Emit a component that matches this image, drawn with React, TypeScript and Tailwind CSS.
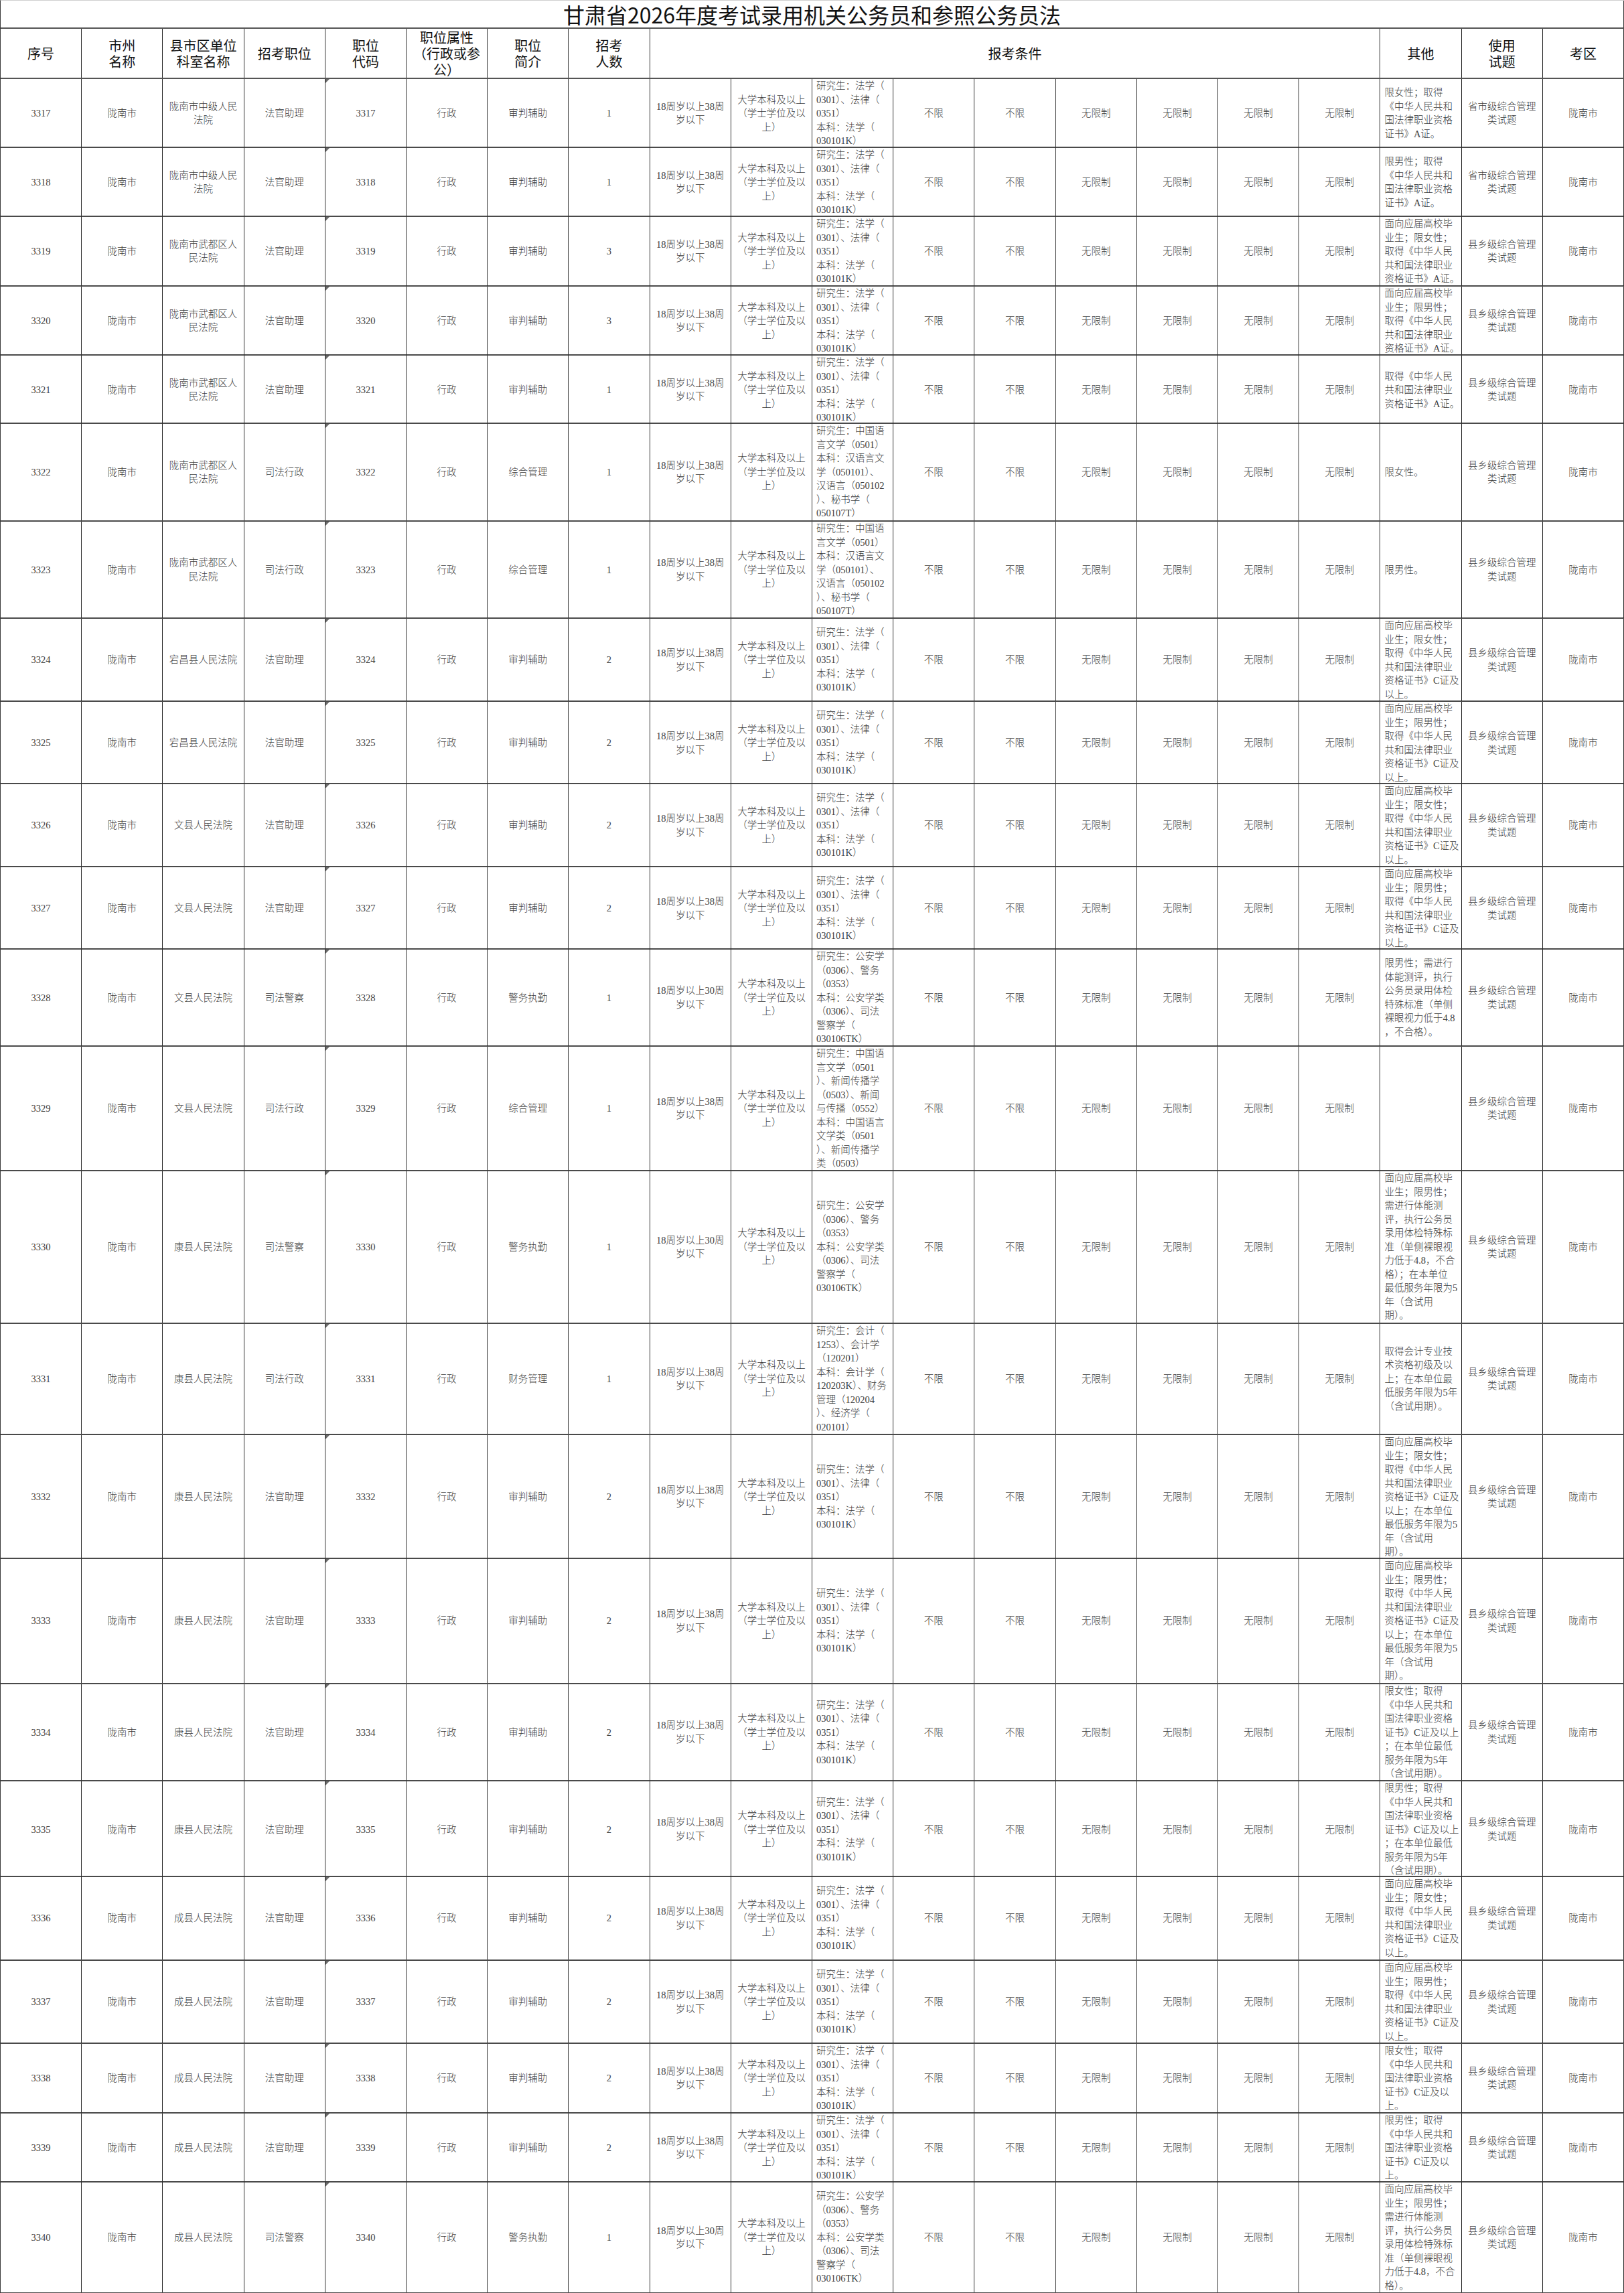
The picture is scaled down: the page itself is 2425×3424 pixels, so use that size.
import React from 'react'

type Row = {
  no: number
  h: string
  unit: string[]
  post: string
  brief: string
  count: string
  age: string
  major: string[]
  other: string[]
  exam: string
}

const LAW = ['研究生：法学（', '0301）、法律（', '0351）', '本科：法学（', '030101K）']
const CHN = ['研究生：中国语', '言文学（0501）', '本科：汉语言文', '学（050101）、', '汉语言（050102', '）、秘书学（', '050107T）']
const POL = ['研究生：公安学', '（0306）、警务', '（0353）', '本科：公安学类', '（0306）、司法', '警察学（', '030106TK）']
const NEWS = ['研究生：中国语', '言文学（0501', '）、新闻传播学', '（0503）、新闻', '与传播（0552）', '本科：中国语言', '文学类（0501', '）、新闻传播学', '类（0503）']
const ACC = ['研究生：会计（', '1253）、会计学', '（120201）', '本科：会计学（', '120203K）、财务', '管理（120204', '）、经济学（', '020101）']

const aCert = (sex: string) => [`限${sex}性；取得`, '《中华人民共和', '国法律职业资格', '证书》A证。']
const gradA = (sex: string) => ['面向应届高校毕', `业生；限${sex}性；`, '取得《中华人民', '共和国法律职业', '资格证书》A证。']
const gradC = (sex: string) => ['面向应届高校毕', `业生；限${sex}性；`, '取得《中华人民', '共和国法律职业', '资格证书》C证及', '以上。']
const gradC5 = (sex: string) => [...gradC(sex).slice(0, 5), '以上；在本单位', '最低服务年限为5', '年（含试用', '期）。']
const cCert5 = (sex: string) => [`限${sex}性；取得`, '《中华人民共和', '国法律职业资格', '证书》C证及以上', '；在本单位最低', '服务年限为5年', '（含试用期）。']
const cCert = (sex: string) => [`限${sex}性；取得`, '《中华人民共和', '国法律职业资格', '证书》C证及以', '上。']

const POL_A = ['限男性；需进行', '体能测评，执行', '公务员录用体检', '特殊标准（单侧', '裸眼视力低于4.8', '，不合格）。']
const POL_GRAD = ['面向应届高校毕', '业生；限男性；', '需进行体能测', '评，执行公务员', '录用体检特殊标', '准（单侧裸眼视', '力低于4.8，不合']

const ZJ = ['陇南市中级人民', '法院']
const WD = ['陇南市武都区人', '民法院']
const DC = ['宕昌县人民法院']
const WX = ['文县人民法院']
const KX = ['康县人民法院']
const CX = ['成县人民法院']

const rows: Row[] = [
  { no: 3317, h: 'h-[103px]', unit: ZJ, post: '法官助理', brief: '审判辅助', count: '1', age: '38', major: LAW, other: aCert('女'), exam: '省市级' },
  { no: 3318, h: 'h-[103px]', unit: ZJ, post: '法官助理', brief: '审判辅助', count: '1', age: '38', major: LAW, other: aCert('男'), exam: '省市级' },
  { no: 3319, h: 'h-[104px]', unit: WD, post: '法官助理', brief: '审判辅助', count: '3', age: '38', major: LAW, other: gradA('女'), exam: '县乡级' },
  { no: 3320, h: 'h-[103px]', unit: WD, post: '法官助理', brief: '审判辅助', count: '3', age: '38', major: LAW, other: gradA('男'), exam: '县乡级' },
  { no: 3321, h: 'h-[102px]', unit: WD, post: '法官助理', brief: '审判辅助', count: '1', age: '38', major: LAW, other: ['取得《中华人民', '共和国法律职业', '资格证书》A证。'], exam: '县乡级' },
  { no: 3322, h: 'h-[146px]', unit: WD, post: '司法行政', brief: '综合管理', count: '1', age: '38', major: CHN, other: ['限女性。'], exam: '县乡级' },
  { no: 3323, h: 'h-[145px]', unit: WD, post: '司法行政', brief: '综合管理', count: '1', age: '38', major: CHN, other: ['限男性。'], exam: '县乡级' },
  { no: 3324, h: 'h-[124px]', unit: DC, post: '法官助理', brief: '审判辅助', count: '2', age: '38', major: LAW, other: gradC('女'), exam: '县乡级' },
  { no: 3325, h: 'h-[123px]', unit: DC, post: '法官助理', brief: '审判辅助', count: '2', age: '38', major: LAW, other: gradC('男'), exam: '县乡级' },
  { no: 3326, h: 'h-[124px]', unit: WX, post: '法官助理', brief: '审判辅助', count: '2', age: '38', major: LAW, other: gradC('女'), exam: '县乡级' },
  { no: 3327, h: 'h-[123px]', unit: WX, post: '法官助理', brief: '审判辅助', count: '2', age: '38', major: LAW, other: gradC('男'), exam: '县乡级' },
  { no: 3328, h: 'h-[145px]', unit: WX, post: '司法警察', brief: '警务执勤', count: '1', age: '30', major: POL, other: POL_A, exam: '县乡级' },
  { no: 3329, h: 'h-[186px]', unit: WX, post: '司法行政', brief: '综合管理', count: '1', age: '38', major: NEWS, other: [], exam: '县乡级' },
  { no: 3330, h: 'h-[228px]', unit: KX, post: '司法警察', brief: '警务执勤', count: '1', age: '30', major: POL, other: [...POL_GRAD, '格）；在本单位', '最低服务年限为5', '年（含试用', '期）。'], exam: '县乡级' },
  { no: 3331, h: 'h-[166px]', unit: KX, post: '司法行政', brief: '财务管理', count: '1', age: '38', major: ACC, other: ['取得会计专业技', '术资格初级及以', '上；在本单位最', '低服务年限为5年', '（含试用期）。'], exam: '县乡级' },
  { no: 3332, h: 'h-[185px]', unit: KX, post: '法官助理', brief: '审判辅助', count: '2', age: '38', major: LAW, other: gradC5('女'), exam: '县乡级' },
  { no: 3333, h: 'h-[187px]', unit: KX, post: '法官助理', brief: '审判辅助', count: '2', age: '38', major: LAW, other: gradC5('男'), exam: '县乡级' },
  { no: 3334, h: 'h-[145px]', unit: KX, post: '法官助理', brief: '审判辅助', count: '2', age: '38', major: LAW, other: cCert5('女'), exam: '县乡级' },
  { no: 3335, h: 'h-[143px]', unit: KX, post: '法官助理', brief: '审判辅助', count: '2', age: '38', major: LAW, other: cCert5('男'), exam: '县乡级' },
  { no: 3336, h: 'h-[125px]', unit: CX, post: '法官助理', brief: '审判辅助', count: '2', age: '38', major: LAW, other: gradC('女'), exam: '县乡级' },
  { no: 3337, h: 'h-[124px]', unit: CX, post: '法官助理', brief: '审判辅助', count: '2', age: '38', major: LAW, other: gradC('男'), exam: '县乡级' },
  { no: 3338, h: 'h-[104px]', unit: CX, post: '法官助理', brief: '审判辅助', count: '2', age: '38', major: LAW, other: cCert('女'), exam: '县乡级' },
  { no: 3339, h: 'h-[103px]', unit: CX, post: '法官助理', brief: '审判辅助', count: '2', age: '38', major: LAW, other: cCert('男'), exam: '县乡级' },
  { no: 3340, h: 'h-[166px]', unit: CX, post: '司法警察', brief: '警务执勤', count: '1', age: '30', major: POL, other: [...POL_GRAD, '格）。'], exam: '县乡级' },
]

const grid = 'grid grid-cols-[repeat(20,minmax(0,1fr))]'
const line = 'border-r border-[#2e2e2e]'

function Lines({ items }: { items: string[] }) {
  return (
    <div>
      {items.map((t, i) => (
        <div key={i} className="whitespace-nowrap">
          {t}
        </div>
      ))}
    </div>
  )
}

function C({ children, left }: { children: React.ReactNode; left?: boolean }) {
  return (
    <div
      className={`${line} flex items-center overflow-visible ${
        left ? 'justify-start pl-[6px] text-left' : 'justify-center text-center'
      }`}
    >
      {children}
    </div>
  )
}

function H({ lines, span }: { lines: string[]; span?: boolean }) {
  return (
    <div className={`${line} flex items-center justify-center text-center ${span ? 'col-span-9' : ''}`}>
      <Lines items={lines} />
    </div>
  )
}

export default function App() {
  return (
    <div className="w-[2425px] bg-white">
      <div className="border-l border-t border-l-[#3a3a3a] border-t-[#cfcfcf]">
        <div className="flex h-[42px] items-center justify-center border-b-2 border-r border-b-[#555] border-r-[#3a3a3a] font-['Noto_Sans_CJK_SC','Noto_Sans',sans-serif] text-[32px] leading-none text-[#111]">
          甘肃省2026年度考试录用机关公务员和参照公务员法
        </div>

        <div
          className={`${grid} h-[75px] border-b-2 border-[#555] font-['Noto_Sans_CJK_SC','Noto_Sans',sans-serif] text-[20px] leading-[24px] text-[#111]`}
        >
          <H lines={['序号']} />
          <H lines={['市州', '名称']} />
          <H lines={['县市区单位', '科室名称']} />
          <H lines={['招考职位']} />
          <H lines={['职位', '代码']} />
          <H lines={['职位属性', '（行政或参', '公）']} />
          <H lines={['职位', '简介']} />
          <H lines={['招考', '人数']} />
          <H lines={['报考条件']} span />
          <H lines={['其他']} />
          <H lines={['使用', '试题']} />
          <H lines={['考区']} />
        </div>

        <div className="font-['Liberation_Serif','Noto_Sans_CJK_SC',serif] text-[14.5px] font-light leading-[20.5px] text-[#404040]">
          {rows.map((r) => (
            <div key={r.no} className={`${grid} ${r.h} border-b-2 border-[#4a4a4a]`}>
              <C>{r.no}</C>
              <C>陇南市</C>
              <C>
                <Lines items={r.unit} />
              </C>
              <C>{r.post}</C>
              <div className={`${line} relative flex items-center justify-center`}>
                <span className="absolute left-0 top-0 h-0 w-0 border-r-[6px] border-t-[6px] border-r-transparent border-t-[#6b6b6b]" />
                {r.no}
              </div>
              <C>行政</C>
              <C>{r.brief}</C>
              <C>{r.count}</C>
              <C>
                <Lines items={[`18周岁以上${r.age}周`, '岁以下']} />
              </C>
              <C>
                <Lines items={['大学本科及以上', '（学士学位及以', '上）']} />
              </C>
              <C left>
                <Lines items={r.major} />
              </C>
              <C>不限</C>
              <C>不限</C>
              <C>无限制</C>
              <C>无限制</C>
              <C>无限制</C>
              <C>无限制</C>
              <C left>
                <Lines items={r.other} />
              </C>
              <C>
                <Lines items={[`${r.exam}综合管理`, '类试题']} />
              </C>
              <C>陇南市</C>
            </div>
          ))}
        </div>
      </div>
    </div>
  )
}
